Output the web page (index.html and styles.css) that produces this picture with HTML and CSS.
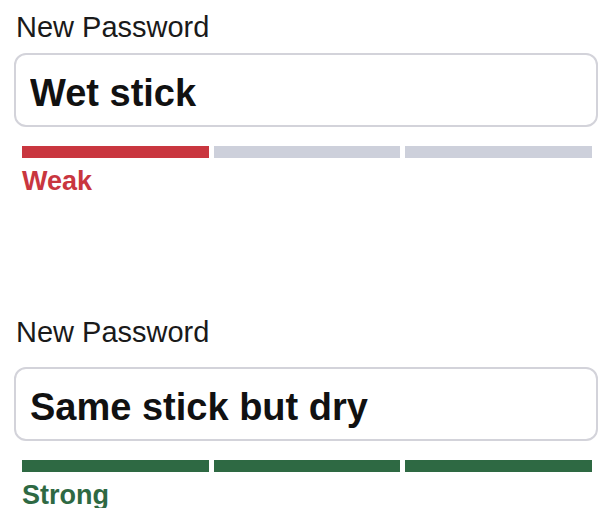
FILE: index.html
```html
<!DOCTYPE html>
<html lang="en">
<head>
    <meta charset="UTF-8">
    <meta name="viewport" content="width=device-width, initial-scale=1.0">
    <title>Password strength</title>
    <link rel="stylesheet" href="styles.css">
</head>
<body>
<div class="page">
    <div class="field">
        <label class="field-label" for="pw-weak">New Password</label>
        <input class="field-input" id="pw-weak" type="text" value="Wet stick">
        <div class="meter weak">
            <span class="segment on"></span>
            <span class="segment"></span>
            <span class="segment"></span>
        </div>
        <p class="strength weak">Weak</p>
    </div>

    <div class="field field-second">
        <label class="field-label" for="pw-strong">New Password</label>
        <input class="field-input" id="pw-strong" type="text" value="Same stick but dry">
        <div class="meter strong">
            <span class="segment on"></span>
            <span class="segment on"></span>
            <span class="segment on"></span>
        </div>
        <p class="strength strong">Strong</p>
    </div>
</div>
</body>
</html>
```

FILE: styles.css
```css
:root {
    --text: #111111;
    --label: #1a1a1a;
    --border: #d3d3da;
    --segment-off: #cdd0db;
    --weak: #c9363f;
    --strong: #2e6943;
    --font: 'Liberation Sans', Arial, sans-serif;
}

* {
    box-sizing: border-box;
    margin: 0;
    padding: 0;
}

body {
    font-family: var(--font);
    background-color: #ffffff;
    color: var(--text);
}

.page {
    width: 610px;
    padding: 0 12px 0 14px;
}

.field {
    display: flex;
    flex-direction: column;
}

.field-label {
    display: block;
    margin-top: 11px;
    padding-left: 2px;
    font-size: 29px;
    line-height: 32px;
    color: var(--label);
}

.field-input {
    margin-top: 10px;
    width: 100%;
    height: 74px;
    padding: 6px 14px 0;
    border: 2px solid var(--border);
    border-radius: 12px;
    font-family: var(--font);
    font-size: 38px;
    font-weight: 700;
    color: var(--text);
    background: #ffffff;
    outline: none;
}

.meter {
    display: flex;
    gap: 5px;
    margin: 19px 6px 0 8px;
}

.segment {
    flex: 1;
    height: 12px;
    background-color: var(--segment-off);
}

.meter.weak .segment.on {
    background-color: var(--weak);
}

.meter.strong .segment.on {
    background-color: var(--strong);
}

.strength {
    margin: 8px 0 0 8px;
    font-size: 27px;
    line-height: 30px;
    font-weight: 700;
}

.strength.weak {
    color: var(--weak);
}

.strength.strong {
    color: var(--strong);
}

.field-second {
    margin-top: 109px;
}

.field-second .field-input {
    margin-top: 19px;
}
```
